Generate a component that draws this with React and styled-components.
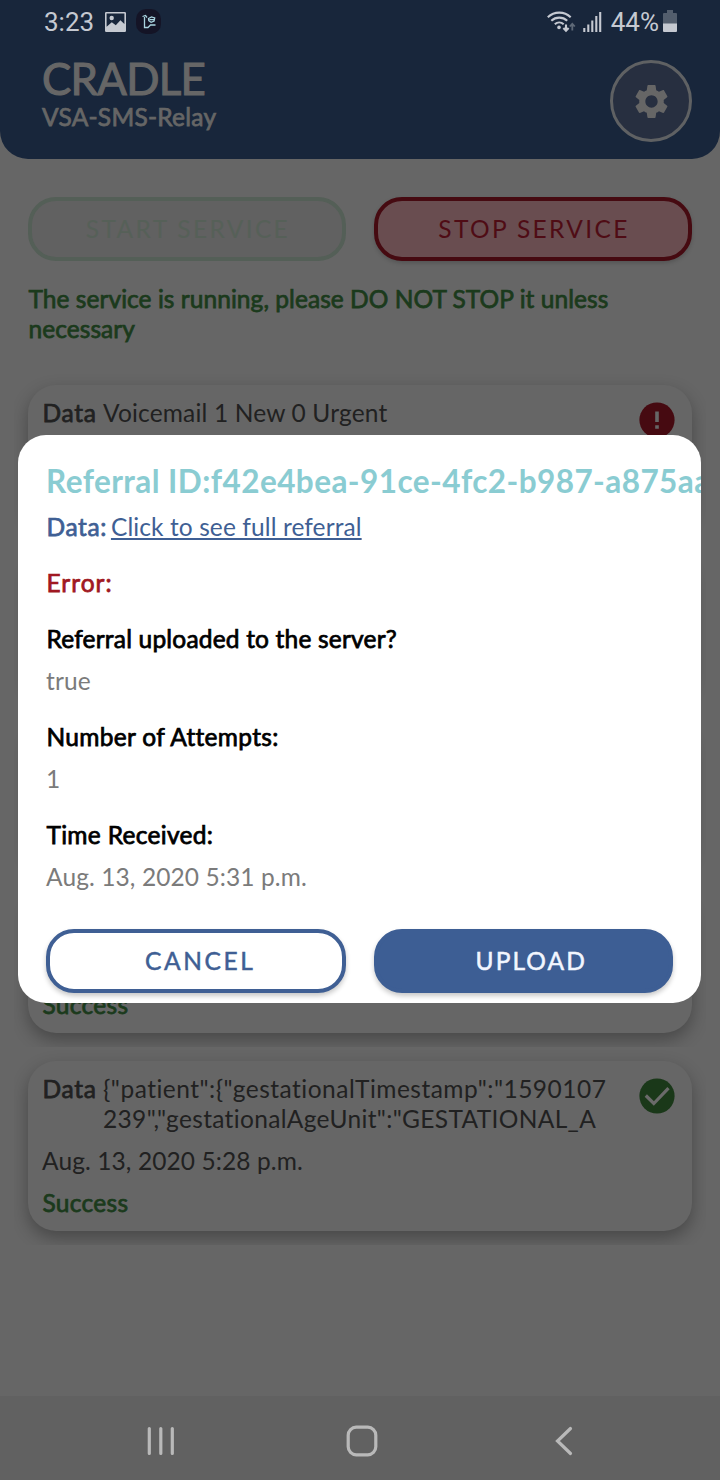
import React from "react";
import styled, { createGlobalStyle, css } from "styled-components";

const GlobalStyle = createGlobalStyle`
  * { box-sizing: border-box; }
  body { margin: 0; background: #666; }
`;

/* Lato regular thickened by a thin stroke, as Android draws synthetic bold */
const fauxBold = css`
  -webkit-text-stroke: 0.75px currentColor;
`;

const Screen = styled.div`
  position: relative;
  display: flex;
  flex-direction: column;
  width: 720px;
  height: 1480px;
  overflow: hidden;
  background: #666;
  color: #212121;
  font: 24.5px/30px Lato, sans-serif;
  font-variant-ligatures: none;
  letter-spacing: 0.1px;
`;

const Header = styled.header`
  height: 159px;
  background: #18263b;
  border-radius: 0 0 28px 28px;
`;

const StatusBar = styled.div`
  display: flex;
  justify-content: space-between;
  align-items: center;
  height: 43px;
  padding: 0 42px 0 44px;
  color: #c5c9d1;
  font: 26px/30px Roboto, sans-serif;
  letter-spacing: 0;
`;

const StatusGroup = styled.div`
  display: flex;
  align-items: center;
`;

const StatusText = styled.span`
  margin-right: ${(p) => p.$gap || 0}px;
`;

const StatusIcon = styled.svg`
  display: block;
  flex: none;
  margin-right: ${(p) => p.$gap || 0}px;
`;

const Brand = styled.div`
  display: flex;
  justify-content: space-between;
  padding: 17px 28px 0 42px;
`;

const AppName = styled.h1`
  margin: -8px 0 0;
  color: #666;
  font-size: 43.75px;
  font-weight: 400;
  line-height: 52px;
  letter-spacing: -0.7px;
  -webkit-text-stroke: 1.1px currentColor;
`;

const AppSubtitle = styled.div`
  color: #666;
  line-height: 22px;
  margin-top: 2px;
  letter-spacing: 0.25px;
  ${fauxBold}
`;

const SettingsButton = styled.button`
  display: flex;
  align-items: center;
  justify-content: center;
  width: 82px;
  height: 82px;
  padding: 0;
  border: 3px solid #5f6163;
  border-radius: 50%;
  background: #272f40;
`;

const Main = styled.main`
  flex: 1;
  padding: 38px 14px 0;
`;

const ServiceButtons = styled.div`
  display: flex;
  gap: 28px;
  padding: 0 14px;
`;

const tones = {
  start: css`color: #566058; border-color: #545f57; background: #616161;`,
  stop: css`
    color: #4f0c15; border-color: #460a11; background: #694d50;
    box-shadow: 0 2px 4px rgba(0, 0, 0, 0.18);
  `,
  cancel: css`
    color: #3f5f94; border-color: #3f5f94; background: #fff;
    box-shadow: 0 3px 5px rgba(0, 0, 0, 0.22);
    text-indent: 9px;
    letter-spacing: 2.6px;
  `,
  upload: css`
    color: #f2f6ff; border-color: #3d5e94; background: #3d5e94;
    box-shadow: 0 3px 5px rgba(0, 0, 0, 0.22);
    text-indent: 16px;
    letter-spacing: 2.1px;
  `,
};

const PillButton = styled.button`
  flex: 1 1 0;
  height: 64px;
  padding: 0;
  border: 4px solid;
  border-radius: 28px;
  font: 24.5px/30px Lato, sans-serif;
  letter-spacing: 2.35px;
  text-indent: 2px;
  ${(p) => tones[p.$tone]}
  ${(p) => p.$strong && css`-webkit-text-stroke: 0.5px currentColor;`}
`;

const ServiceMessage = styled.p`
  margin: 23px 14px 27px;
  padding-left: 0.5px;
  color: #1b3a1c;
  letter-spacing: 0.05px;
  ${fauxBold}
`;

/* Each list row clips the shadow of its card */
const ListRow = styled.div`
  padding: 14px;
  overflow: hidden;
`;

const Card = styled.article`
  display: flex;
  justify-content: space-between;
  padding: 13px 17px 13px 14px;
  border-radius: 28px;
  background: #666;
  box-shadow: 0 7px 17px rgba(0, 0, 0, 0.3);
`;

const CardBody = styled.div`
  display: flex;
  flex-direction: column;
  gap: 12px;
`;

const DataRow = styled.div`
  display: flex;
  min-height: 31px;
`;

const Label = styled.span`
  width: 61px;
  letter-spacing: 0.7px;
  padding-left: 0.5px;
  ${fauxBold}
`;

const DataLine = styled.div`
  white-space: nowrap;
  letter-spacing: ${(p) => p.$spacing || "0.17px"};
`;

const CardLine = styled.div`
  min-height: 30px;
`;

const Result = styled(CardLine)`
  color: #1b3a1c;
  padding-left: 0.5px;
  letter-spacing: 0.3px;
  ${fauxBold}
`;

const CardIcon = styled.svg`
  display: block;
  flex: none;
  margin-top: 4px;
`;

const NavBar = styled.nav`
  display: flex;
  align-items: center;
  height: 84px;
  padding: 5px 0 0 147px;
  background: #616161;
`;

const NavIcon = styled.svg`
  display: block;
  margin-right: ${(p) => p.$gap || 0}px;
`;

const DialogLayer = styled.div`
  position: absolute;
  inset: 435px 19px auto 18px;
`;

const Dialog = styled.section`
  display: flex;
  flex-direction: column;
  height: 568px;
  padding: 27px 0 10px 28px;
  overflow: hidden;
  border-radius: 28px;
  background: #fff;
`;

const DialogTitle = styled.h2`
  margin: 0 0 12px;
  color: #8accd2;
  font-size: 31.5px;
  font-weight: 700;
  line-height: 38px;
  letter-spacing: 0.43px;
  white-space: nowrap;
`;

const Field = styled.div`
  display: flex;
  flex-direction: ${(p) => (p.$inline ? "row" : "column")};
  gap: ${(p) => (p.$inline ? "4px" : "12px")};
  margin-bottom: 26px;
`;

const FieldLabel = styled.span`
  padding-left: 0.5px;
  color: ${(p) => p.$color || "#000"};
  letter-spacing: ${(p) => p.$spacing || "0.19px"};
  ${fauxBold}
`;

const FieldValue = styled.span`
  color: #7b7b7b;
`;

const ReferralLink = styled.a`
  color: #3f5f94;
  text-decoration: underline;
  text-decoration-thickness: 1.5px;
  text-underline-offset: 2px;
  text-decoration-skip-ink: none;
`;

const DialogActions = styled.div`
  display: flex;
  gap: 28px;
  margin-top: auto;
  padding-right: 28px;
`;

function PictureIcon() {
  return (
    <StatusIcon width="21" height="20" viewBox="0 0 21 20" $gap={10}>
      <path
        fill="#c5c9d1"
        fillRule="evenodd"
        d="M1.2 0h18.6q1.2 0 1.2 1.2v17.6q0 1.2-1.2 1.2H1.2Q0 20 0 18.8V1.2Q0 0 1.2 0zM1.6 1.6v13.2l5.2-4.6 4 3 4.6-5 4 3.8V1.6zM4.5 6a2.2 2.2 0 1 0 4.4 0a2.2 2.2 0 1 0-4.4 0z"
      />
    </StatusIcon>
  );
}

function AppBadgeIcon() {
  return (
    <StatusIcon width="25" height="25" viewBox="0 0 25 25">
      <rect width="25" height="25" rx="10" fill="#141426" />
      <g fill="none" stroke="#a9d3df" strokeWidth="1.3">
        <path d="M6.5 7.5l3-1 1.5 2M8.5 8v10.5h3.5l2.5-2.5h5" />
        <path d="M12.5 9.5l3-1.5 3.2 1-.6 3-3 1.3-2.3-1.6zM13.5 10.7h4.5" />
      </g>
    </StatusIcon>
  );
}

function WifiIcon() {
  return (
    <StatusIcon width="29" height="24" viewBox="0 0 29 24" $gap={7}>
      <g fill="none" stroke="#c5c9d1" strokeWidth="2.1">
        <path d="M.8 7.2a16.6 16.6 0 0 1 22.9 0" />
        <path d="M4.3 10.8a11.6 11.6 0 0 1 15.9 0" />
        <path d="M7.8 14.2a6.7 6.7 0 0 1 8.9 0" />
        <path d="M19 14.5v6M16.4 18l2.6 2.8 2.6-2.8" />
      </g>
      <circle cx="12" cy="17.4" r="1.8" fill="#c5c9d1" />
      <path d="M25.3 20.4v-6M22.8 16.5l2.5-2.7 2.5 2.7" fill="none" stroke="#5e6977" strokeWidth="1.8" />
    </StatusIcon>
  );
}

function SignalIcon() {
  return (
    <StatusIcon width="19" height="20" viewBox="0 0 19 20" $gap={9}>
      <path d="M1.3 20v-4M5.3 20v-7.5M9.3 20V8.5M13.3 20V4M17.2 20V0" stroke="#c5c9d1" strokeWidth="2.1" />
    </StatusIcon>
  );
}

function BatteryIcon() {
  return (
    <StatusIcon width="15" height="23" viewBox="0 0 15 23">
      <path d="M4 0h6v3h3q1 0 1 1v10H0V4q0-1 1-1h3z" fill="#535e6d" />
      <path d="M0 13.5h14V21q0 1-1 1H1q-1 0-1-1z" fill="#c5c9d1" />
    </StatusIcon>
  );
}

function GearIcon() {
  return (
    <svg width="41" height="41" viewBox="0 0 24 24" fill="#666">
      <path d="M19.14 12.94c.04-.3.06-.61.06-.94 0-.32-.02-.64-.07-.94l2.03-1.58c.18-.14.23-.41.12-.61l-1.92-3.32c-.12-.22-.37-.29-.59-.22l-2.39.96c-.5-.38-1.03-.7-1.62-.94l-.36-2.54c-.04-.24-.24-.41-.48-.41h-3.84c-.24 0-.43.17-.47.41l-.36 2.54c-.59.24-1.13.57-1.62.94l-2.39-.96c-.22-.08-.47 0-.59.22L2.74 8.87c-.12.21-.08.47.12.61l2.03 1.58c-.05.3-.09.63-.09.94s.02.64.07.94l-2.03 1.58c-.18.14-.23.41-.12.61l1.92 3.32c.12.22.37.29.59.22l2.39-.96c.5.38 1.03.7 1.62.94l.36 2.54c.05.24.24.41.48.41h3.84c.24 0 .44-.17.47-.41l.36-2.54c.59-.24 1.13-.56 1.62-.94l2.39.96c.22.08.47 0 .59-.22l1.92-3.32c.12-.22.07-.47-.12-.61zM12 15.6c-1.98 0-3.6-1.62-3.6-3.6s1.62-3.6 3.6-3.6 3.6 1.62 3.6 3.6-1.62 3.6-3.6 3.6z" />
    </svg>
  );
}

function ErrorIcon() {
  return (
    <CardIcon width="36" height="36" viewBox="0 0 36 36">
      <circle cx="18" cy="18" r="17.6" fill="#460a11" />
      <path d="M16.2 9.5h3.6v10.4h-3.6zM16.2 23.2h3.6v3.6h-3.6z" fill="#666" />
    </CardIcon>
  );
}

function CheckIcon() {
  return (
    <CardIcon width="36" height="36" viewBox="0 0 36 36">
      <circle cx="18" cy="18" r="17.6" fill="#1a3819" />
      <path d="M6.8 17.5l8 8L29.5 10.2" fill="none" stroke="#6a6a6a" strokeWidth="3.2" />
    </CardIcon>
  );
}

const messages = [
  { label: "Data", data: [{ text: "Voicemail 1 New 0 Urgent" }], failed: true },
  {},
  {},
  { result: "Success" },
  {
    label: "Data",
    data: [
      { text: '{"patient":{"gestationalTimestamp":"1590107', spacing: "0.49px" },
      { text: '239","gestationalAgeUnit":"GESTATIONAL_A', spacing: "0.34px" },
    ],
    time: "Aug. 13, 2020 5:28 p.m.",
    result: "Success",
  },
];

function MessageCard({ label, data = [], time, result, failed }) {
  return (
    <ListRow>
      <Card>
        <CardBody>
          <DataRow>
            <Label>{label}</Label>
            <div>
              {data.map((line) => (
                <DataLine key={line.text} $spacing={line.spacing}>
                  {line.text}
                </DataLine>
              ))}
            </div>
          </DataRow>
          <CardLine>{time}</CardLine>
          <Result>{result}</Result>
        </CardBody>
        {failed ? <ErrorIcon /> : <CheckIcon />}
      </Card>
    </ListRow>
  );
}

export default function App() {
  return (
    <Screen>
      <GlobalStyle />
      <Header>
        <StatusBar>
          <StatusGroup>
            <StatusText $gap={11}>3:23</StatusText>
            <PictureIcon />
            <AppBadgeIcon />
          </StatusGroup>
          <StatusGroup>
            <WifiIcon />
            <SignalIcon />
            <StatusText $gap={4}>44%</StatusText>
            <BatteryIcon />
          </StatusGroup>
        </StatusBar>
        <Brand>
          <div>
            <AppName>CRADLE</AppName>
            <AppSubtitle>VSA-SMS-Relay</AppSubtitle>
          </div>
          <SettingsButton aria-label="Settings">
            <GearIcon />
          </SettingsButton>
        </Brand>
      </Header>

      <Main>
        <ServiceButtons>
          <PillButton $tone="start">START SERVICE</PillButton>
          <PillButton $tone="stop">STOP SERVICE</PillButton>
        </ServiceButtons>
        <ServiceMessage>
          The service is running, please DO NOT STOP it unless necessary
        </ServiceMessage>
        {messages.map((m, i) => (
          <MessageCard key={i} {...m} />
        ))}
      </Main>

      <NavBar>
        <NavIcon width="28" height="30" viewBox="0 0 28 30" $gap={171}>
          <path d="M2.3 2.5v25M13.8 2.5v25M25.3 2.5v25" stroke="#b9b9b9" strokeWidth="3.2" strokeLinecap="round" />
        </NavIcon>
        <NavIcon width="32" height="32" viewBox="0 0 32 32" $gap={177}>
          <rect x="2.2" y="2.2" width="27.6" height="27.6" rx="8" fill="none" stroke="#b9b9b9" strokeWidth="3.2" />
        </NavIcon>
        <NavIcon width="18" height="30" viewBox="0 0 18 30">
          <path d="M15.5 2.5L2.5 15l13 12.5" fill="none" stroke="#b9b9b9" strokeWidth="3.2" strokeLinecap="round" />
        </NavIcon>
      </NavBar>

      <DialogLayer>
        <Dialog role="dialog">
          <DialogTitle>Referral ID:f42e4bea-91ce-4fc2-b987-a875aa</DialogTitle>
          <Field $inline>
            <FieldLabel $color="#3f5f94" $spacing="0.6px">Data:</FieldLabel>
            <ReferralLink>Click to see full referral</ReferralLink>
          </Field>
          <Field>
            <FieldLabel $color="#a01822" $spacing="1px">Error:</FieldLabel>
          </Field>
          <Field>
            <FieldLabel>Referral uploaded to the server?</FieldLabel>
            <FieldValue>true</FieldValue>
          </Field>
          <Field>
            <FieldLabel $spacing="0.3px">Number of Attempts:</FieldLabel>
            <FieldValue>1</FieldValue>
          </Field>
          <Field>
            <FieldLabel $spacing="0.3px">Time Received:</FieldLabel>
            <FieldValue>Aug. 13, 2020 5:31 p.m.</FieldValue>
          </Field>
          <DialogActions>
            <PillButton $tone="cancel" $strong>CANCEL</PillButton>
            <PillButton $tone="upload" $strong>UPLOAD</PillButton>
          </DialogActions>
        </Dialog>
      </DialogLayer>
    </Screen>
  );
}
